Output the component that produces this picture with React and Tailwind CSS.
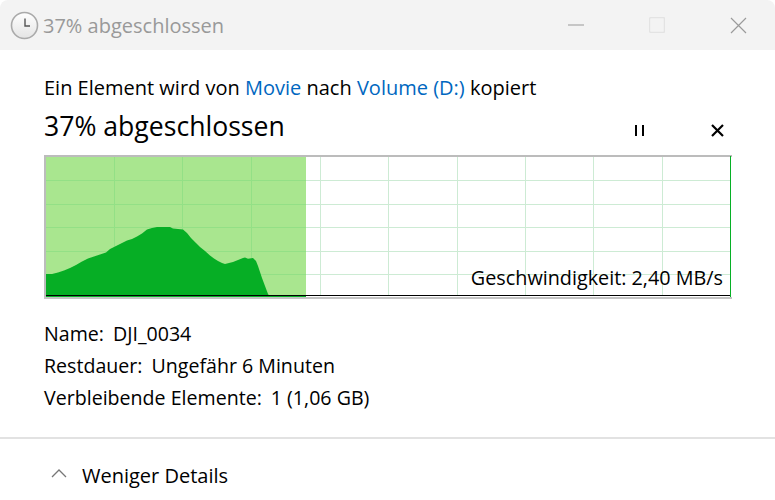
const font = { fontFamily: '"Open Sans", sans-serif' };

const curve = "46,297 46,274 52,274 58,272.5 64,270.5 70,268 76,265 82,261.5 88,258.5 94,256.5 100,254.5 106,252.5 110,249 116,246 122,243 127,240.5 132,239 137,236.5 142,233.5 147,229.5 152,228 157,227 164,227 170,227 173,228.5 178,229 183,229.5 187,233 191,238 196,243 200,247 205,251 210,255.5 214,258.5 218,261 222,263 225,264 229,263 233,262 238,260 243,258 245,257.5 248,258.7 253,258 256,261 258,266 260,272 262,278 265,286 268,294 270,297";

function Graph() {
  const vs = [114, 182, 251, 320, 388, 457, 525, 593, 662];
  const hs = [180, 204, 227, 251, 274];
  return (
    <div className="relative h-[144px] w-[688px]">
      <svg width="688" height="144" viewBox="44 155 688 144" className="block" shapeRendering="crispEdges">
        <rect x="44" y="155" width="688" height="144" fill="#fff" />
        {vs.map((x) => <rect key={x} x={x} y="157" width="1" height="139" fill="#cdebd4" />)}
        {hs.map((y) => <rect key={y} x="46" y={y} width="684" height="1" fill="#cdebd4" />)}
        <rect x="46" y="157" width="260" height="139" fill="#a9e68f" />
        {[114, 182, 251].map((x) => <rect key={x} x={x} y="157" width="1" height="139" fill="#93e086" />)}
        {hs.map((y) => <rect key={y} x="46" y={y} width="260" height="1" fill="#93e086" />)}
        <polygon points={curve} fill="#06ae25" shapeRendering="auto" />
        <rect x="44" y="155" width="688" height="1.5" fill="#bcbcbc" />
        <rect x="44" y="155" width="1.5" height="144" fill="#bcbcbc" />
        <rect x="44" y="297" width="688" height="2" fill="#c4c4c4" />
        <rect x="730" y="156" width="1" height="141" fill="#06b025" />
        <rect x="46" y="295" width="684" height="1" fill="#000" />
        <rect x="46" y="296" width="260" height="1" fill="#06ae25" />
      </svg>
      <span className="absolute bottom-[8px] right-[9px] text-[19.8px] leading-[26px] text-black">Geschwindigkeit: 2,40 MB/s</span>
    </div>
  );
}

function ClockIcon() {
  return (
    <svg width="29" height="29" viewBox="0 0 29 29" className="shrink-0">
      <defs>
        <linearGradient id="clockFace" x1="0" y1="0" x2="0" y2="1">
          <stop offset="0" stopColor="#ffffff" />
          <stop offset="1" stopColor="#e4e4e4" />
        </linearGradient>
      </defs>
      <circle cx="14.5" cy="14.5" r="13" fill="url(#clockFace)" stroke="#aaaaaa" strokeWidth="1.6" />
      <path d="M15 7.5v7.5h5" fill="none" stroke="#555" strokeWidth="1.4" />
    </svg>
  );
}

function Row({ label, value }) {
  return (
    <div className="flex h-[32px] items-center gap-[9px] text-[19.6px] text-black">
      <span>{label}</span>
      <span>{value}</span>
    </div>
  );
}

export default function App() {
  return (
    <div className="flex h-[500px] w-[775px] flex-col overflow-hidden bg-white" style={font}>
      <div className="flex h-[50px] shrink-0 items-center rounded-t-[8px] bg-[#f3f3f3] pl-[10px]">
        <ClockIcon />
        <span className="ml-[4px] pt-[1px] text-[20px] text-[#999999]">37% abgeschlossen</span>
        <div className="ml-auto flex items-center">
          <svg width="16" height="2" className="mr-[65px]"><rect width="16" height="1" y="0.5" fill="#9a9a9a" /></svg>
          <svg width="16" height="16" className="mr-[65px]"><rect x="0.5" y="0.5" width="15" height="15" rx="1.5" fill="none" stroke="#e3e3e3" strokeWidth="1.4" /></svg>
          <svg width="17" height="17" className="mr-[28px]"><path d="M1 1l15 15M16 1L1 16" stroke="#9a9a9a" strokeWidth="1.2" /></svg>
        </div>
      </div>
      <div className="flex flex-1 flex-col px-[44px]">
        <div className="mt-[24px] h-[28px] text-[20px] leading-[28px] text-black">
          Ein Element wird von <span className="text-[#0067c0]">Movie</span> nach <span className="text-[#0067c0]">Volume (D:)</span> kopiert
        </div>
        <div className="mt-[7px] flex h-[36px] items-center">
          <span className="text-[26.6px] text-black">37% abgeschlossen</span>
          <div className="ml-auto mr-[7px] mt-[7px] flex items-center">
            <svg width="11" height="11" className="mr-[66px]"><path d="M1 0h2v11H1zM8 0h2v11H8z" fill="#000" /></svg>
            <svg width="13" height="13"><path d="M1 1l11 11M12 1L1 12" stroke="#000" strokeWidth="2.2" /></svg>
          </div>
        </div>
        <div className="mt-[10px]">
          <Graph />
        </div>
        <div className="mt-[19px] flex flex-col">
          <Row label="Name:" value="DJI_0034" />
          <Row label="Restdauer:" value="Ungefähr 6 Minuten" />
          <Row label="Verbleibende Elemente:" value="1 (1,06 GB)" />
        </div>
      </div>
      <div className="flex h-[63px] shrink-0 items-center border-t-2 border-[#e2e2e2] pl-[51px] pt-[13px]">
        <svg width="16" height="10" className="mb-[6px]"><path d="M1 9l7-7 7 7" fill="none" stroke="#777" strokeWidth="1.3" /></svg>
        <span className="ml-[15px] text-[20px] text-black">Weniger Details</span>
      </div>
    </div>
  );
}
